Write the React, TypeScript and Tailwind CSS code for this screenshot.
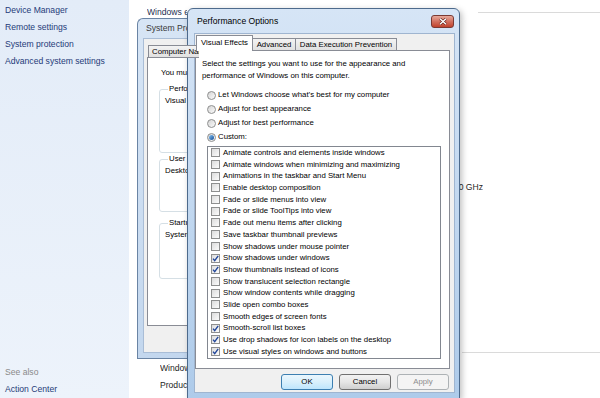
import clsx from "clsx";

const sideLinks = ["Device Manager", "Remote settings", "System protection", "Advanced system settings"];

const effects: [string, boolean][] = [
  ["Animate controls and elements inside windows", false],
  ["Animate windows when minimizing and maximizing", false],
  ["Animations in the taskbar and Start Menu", false],
  ["Enable desktop composition", false],
  ["Fade or slide menus into view", false],
  ["Fade or slide ToolTips into view", false],
  ["Fade out menu items after clicking", false],
  ["Save taskbar thumbnail previews", false],
  ["Show shadows under mouse pointer", false],
  ["Show shadows under windows", true],
  ["Show thumbnails instead of icons", true],
  ["Show translucent selection rectangle", false],
  ["Show window contents while dragging", false],
  ["Slide open combo boxes", false],
  ["Smooth edges of screen fonts", false],
  ["Smooth-scroll list boxes", true],
  ["Use drop shadows for icon labels on the desktop", true],
  ["Use visual styles on windows and buttons", true],
];

const radios = [
  { label: "Let Windows choose what\u2019s best for my computer", on: false },
  { label: "Adjust for best appearance", on: false },
  { label: "Adjust for best performance", on: false },
  { label: "Custom:", on: true },
];

function Radio({ on }: { on: boolean }) {
  return (
    <span className="flex h-[9px] w-[9px] shrink-0 items-center justify-center rounded-full border border-[#8e8f8f] bg-gradient-to-br from-[#d4d4d4] to-[#fbfbfb]">
      {on ? <span className="h-[5px] w-[5px] rounded-full bg-gradient-to-br from-[#86c3f2] to-[#104d97]" /> : null}
    </span>
  );
}

function Check({ checked }: { checked: boolean }) {
  return (
    <span className="flex h-[9px] w-[9px] shrink-0 items-center justify-center border border-[#8e8f8f] bg-gradient-to-br from-[#dcdcdc] to-[#fcfcfc]">
      {checked ? (
        <svg width="7" height="7" viewBox="0 0 7 7">
          <path d="M1 3.6 L2.7 5.6 L6.2 0.8" fill="none" stroke="#21469a" strokeWidth="1.4" />
        </svg>
      ) : null}
    </span>
  );
}

function WinButton({ label, kind }: { label: string; kind?: "default" | "disabled" }) {
  return (
    <div
      className={clsx(
        "flex h-[16px] w-[52px] items-center justify-center rounded-[3px] border",
        kind === "default" && "border-[#3c7fb1] bg-gradient-to-b from-[#eaf6fd] via-[#d9f0fc] to-[#bee6fd] text-black",
        kind === "disabled" && "border-[#adb2b5] bg-[#f4f4f4] text-[#8d8d8d]",
        !kind && "border-[#707070] bg-gradient-to-b from-[#f2f2f2] via-[#e6e6e6] to-[#cfcfcf] text-black"
      )}
    >
      {label}
    </div>
  );
}

function CloseButton() {
  return (
    <div className="flex h-[13px] w-[23px] items-center justify-center rounded-[3px] border border-[#7a3a33] bg-gradient-to-b from-[#e6a99b] via-[#d2705f] to-[#c0412b]">
      <svg width="8" height="7" viewBox="0 0 8 7">
        <path d="M1 0.8 L7 6.2 M7 0.8 L1 6.2" stroke="#5a1a12" strokeWidth="2.6" />
        <path d="M1 0.8 L7 6.2 M7 0.8 L1 6.2" stroke="#ffffff" strokeWidth="1.5" />
      </svg>
    </div>
  );
}

function GroupBox({ legend, text, className }: { legend: string; text: string; className: string }) {
  return (
    <fieldset className={clsx("ml-[11px] w-[260px] rounded-[3px] border border-[#d5dfe5] pl-[5px]", className)}>
      <legend className="ml-[3px] whitespace-nowrap px-[1px] leading-[12px]">{legend}</legend>
      <div className="whitespace-nowrap leading-[12px]">{text}</div>
    </fieldset>
  );
}

// only the left strip of this window shows from under Performance Options
function SystemProperties() {
  return (
    <div className="absolute left-[137px] top-[18px] flex h-[341px] w-[62px] flex-col overflow-hidden rounded-tl-[6px] border border-r-0 border-[#6a84a4] bg-gradient-to-b from-[#d7e5f5] to-[#c3d7ee]">
      <div className="flex h-[19px] items-center whitespace-nowrap pl-[8px] text-[8.6px] text-[#3a3a3a]">System Properties</div>
      <div className="mb-[5px] ml-[5px] w-[300px] flex-1 border border-[#a9bdd6] bg-[#f0f0f0] text-[7.8px] text-black">
        <div className="relative z-10 ml-[4px] mt-[6px] flex h-[13px] items-end">
          <div className="flex h-[13px] shrink-0 items-center whitespace-nowrap border border-[#898c95] bg-gradient-to-b from-[#f3f3f3] to-[#e1e1e1] px-[3px]">
            Computer Name
          </div>
        </div>
        <div className="-mt-px ml-[3px] h-[269px] border border-[#898c95] bg-white pt-[9px]">
          <div className="whitespace-nowrap pl-[13px] leading-[12px]">
            You must be logged on as an Administrator to make most of these changes.
          </div>
          <GroupBox
            className="mt-[4px] h-[70px]"
            legend="Performance"
            text="Visual effects, processor scheduling, memory usage, and virtual memory"
          />
          <GroupBox className="h-[59px]" legend="User Profiles" text="Desktop settings related to your logon" />
          <GroupBox
            className="mt-[5px] h-[62px]"
            legend="Startup and Recovery"
            text="System startup, system failure, and debugging information"
          />
        </div>
      </div>
    </div>
  );
}

function PerformanceOptions() {
  return (
    <div className="absolute left-[187px] top-[8px] flex h-[391px] w-[273px] flex-col rounded-t-[6px] border border-[#4d6a8c] bg-gradient-to-b from-[#d6e5f6] via-[#c2d8f0] to-[#aecbea] shadow-[2px_2px_6px_rgba(0,0,0,0.25)]">
      <div className="flex h-[24px] items-center justify-between pl-[9px] pr-[5px]">
        <span className="text-[8.6px] text-black">Performance Options</span>
        <CloseButton />
      </div>
      <div className="mb-[5px] ml-[6px] mr-[4px] flex-1 border border-[#9fb5d0] bg-[#f0f0f0] text-[7.8px] text-black">
        <div className="relative z-10 ml-[1px] mt-[1px] flex h-[16px] items-end">
          <div className="flex h-[16px] w-[57px] items-center justify-center border border-b-0 border-[#898c95] bg-white pb-[2px]">
            Visual Effects
          </div>
          <div className="-ml-px flex h-[13px] w-[44px] items-center justify-center border border-[#898c95] bg-gradient-to-b from-[#f3f3f3] to-[#e1e1e1]">
            Advanced
          </div>
          <div className="-ml-px flex h-[13px] w-[102px] items-center justify-center border border-[#898c95] bg-gradient-to-b from-[#f3f3f3] to-[#e1e1e1]">
            Data Execution Prevention
          </div>
        </div>
        <div className="-mt-px mr-[4px] h-[319px] border border-[#898c95] bg-white pl-[6px] pt-[7px]">
          <div className="whitespace-nowrap leading-[12px]">
            <div>Select the settings you want to use for the appearance and</div>
            <div>performance of Windows on this computer.</div>
          </div>
          <div className="ml-[5px] mt-[6px] flex flex-col">
            {radios.map((r) => (
              <div key={r.label} className="flex h-[14px] items-center gap-[2px] whitespace-nowrap">
                <Radio on={r.on} />
                <span>{r.label}</span>
              </div>
            ))}
          </div>
          <div className="ml-[5px] mt-[2px] h-[213px] w-[234px] border border-[#828790] bg-white">
            {effects.map(([label, checked]) => (
              <div key={label} className="flex h-[11.7px] items-center gap-[3px] whitespace-nowrap pl-[3px]">
                <Check checked={checked} />
                <span>{label}</span>
              </div>
            ))}
          </div>
        </div>
        <div className="mr-[5px] mt-[5px] flex justify-end gap-[6px]">
          <WinButton label="OK" kind="default" />
          <WinButton label="Cancel" />
          <WinButton label="Apply" kind="disabled" />
        </div>
      </div>
    </div>
  );
}

export default function App() {
  return (
    <div className="relative h-[398px] w-[600px] overflow-hidden bg-white font-['Liberation_Sans',Arial,sans-serif]">
      <div className="flex h-full">
        {/* Left task pane */}
        <aside className="flex w-[129px] shrink-0 flex-col justify-between bg-gradient-to-b from-[#e3ecf8] to-[#edf3fb] pl-[5px] text-[8.6px]">
          <div className="pt-[1.5px]">
            {sideLinks.map((l) => (
              <div key={l} className="h-[17.3px] leading-[17.3px] text-[#1f3b78]">
                {l}
              </div>
            ))}
          </div>
          <div>
            <div className="h-[17px] leading-[17px] text-[#8a8a8a]">See also</div>
            <div className="h-[17px] leading-[17px] text-[#1f3b78]">Action Center</div>
          </div>
        </aside>

        {/* System page, mostly covered by the dialogs */}
        <main className="flex-1 text-[8.6px] text-[#1e1e1e]">
          <div className="flex h-[19px] items-center pl-[18px] pt-[5px] leading-[14px]">
            <span className="w-[40px] overflow-hidden whitespace-nowrap text-[#1e2f52]">Windows edition</span>
            <span className="ml-[291px] h-px flex-1 bg-[#dadada]" />
          </div>
          <div className="ml-[314px] mt-[161px] flex h-[14px] w-[40px] justify-end overflow-hidden whitespace-nowrap leading-[14px]">
            <span className="shrink-0">2.40 GHz</span>
          </div>
          <div className="mt-[151px] flex h-[14px] items-center">
            <span className="ml-[333px] h-px flex-1 bg-[#dadada]" />
          </div>
          <div className="ml-[31px] mt-[2px] h-[14px] w-[27px] overflow-hidden whitespace-nowrap leading-[14px]">Windows is activated</div>
          <div className="ml-[31px] mt-[3px] h-[14px] w-[27px] overflow-hidden whitespace-nowrap leading-[14px]">Product ID: 00426-OEM-8992662-00006</div>
        </main>
      </div>

      <SystemProperties />
      <PerformanceOptions />
    </div>
  );
}
